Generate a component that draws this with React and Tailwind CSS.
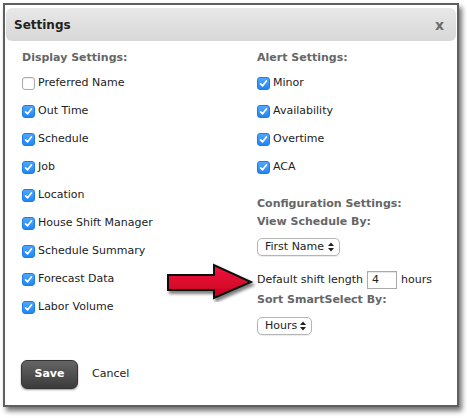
import React from 'react';

// checkbox drawn as a mac-style box
function Check({ on }) {
  if (!on) {
    return <span className="w-[13px] h-[13px] rounded-[3px] border border-[#a9a9a9] bg-white shadow-[inset_0_1px_1px_rgba(0,0,0,0.08)]" />;
  }
  return (
    <span className="w-[13px] h-[13px] rounded-[3px] bg-gradient-to-b from-[#4fa6ff] to-[#1f86f5] border border-[#1b7be0] flex items-center justify-center">
      <svg width="9" height="9" viewBox="0 0 9 9">
        <path d="M1.6 4.8 L3.6 6.8 L7.4 2" fill="none" stroke="white" strokeWidth="1.7" strokeLinecap="round" strokeLinejoin="round" />
      </svg>
    </span>
  );
}

function Row({ label, on = true }) {
  return (
    <div className="h-7 flex items-center gap-[3px] text-[#222]">
      <Check on={on} />
      <span>{label}</span>
    </div>
  );
}

function Select({ label, w }) {
  return (
    <div className={`h-[18px] ${w} rounded-[5px] border border-[#b5b5b5] bg-white flex items-center justify-between pl-[7px] pr-[5px] shadow-[0_1px_1px_rgba(0,0,0,0.08)] text-[#222]`}>
      <span>{label}</span>
      <svg width="6" height="10" viewBox="0 0 6 10">
        <path d="M0 4 L3 0.5 L6 4 Z M0 6 L3 9.5 L6 6 Z" fill="#222" />
      </svg>
    </div>
  );
}

function App() {
  const display = [
    ['Preferred Name', false],
    ['Out Time', true],
    ['Schedule', true],
    ['Job', true],
    ['Location', true],
    ['House Shift Manager', true],
    ['Schedule Summary', true],
    ['Forecast Data', true],
    ['Labor Volume', true],
  ];
  const alerts = ['Minor', 'Availability', 'Overtime', 'ACA'];

  return (
    <div className="w-[467px] h-[418px] bg-white p-[3px]" style={{ fontFamily: '"DejaVu Sans", Verdana, sans-serif' }}>
      <div className="relative w-[456px] h-[404px] border-2 border-[#5f5f5f] bg-white shadow-[3px_4px_5px_rgba(0,0,0,0.55)] text-[11px] flex flex-col">
        {/* header */}
        <div className="mx-[1px] mt-[3px] h-[33px] rounded-md bg-gradient-to-b from-[#e8e8e8] to-[#d7d7d7] flex items-center justify-between pl-[8px] pr-[12px]">
          <span className="text-[12px] font-bold text-[#222]">Settings</span>
          <span className="text-[14px] font-bold text-[#6b6b6b] leading-none">x</span>
        </div>

        {/* body */}
        <div className="flex pl-[17px] pt-[6px]">
          <div className="w-[235px]">
            <div className="h-[22px] flex items-center font-bold text-[#666]">Display Settings:</div>
            {display.map(([l, on]) => <Row key={l} label={l} on={on} />)}
          </div>
          <div>
            <div className="h-[22px] flex items-center font-bold text-[#666]">Alert Settings:</div>
            {alerts.map(l => <Row key={l} label={l} />)}
            <div className="mt-[14px] h-[18px] flex items-center font-bold text-[#666]">Configuration Settings:</div>
            <div className="h-[18px] flex items-center font-bold text-[#666]">View Schedule By:</div>
            <div className="mt-[7px]"><Select label="First Name" w="w-[83px]" /></div>
            <div className="mt-[15px] flex items-center gap-[4px] text-[#222]">
              <span>Default shift length</span>
              <span className="w-[30px] h-[18px] border border-[#aaa] bg-white flex items-center pl-[4px] shadow-[inset_0_1px_1px_rgba(0,0,0,0.1)]">4</span>
              <span>hours</span>
            </div>
            <div className="h-[22px] flex items-center font-bold text-[#666]">Sort SmartSelect By:</div>
            <div className="mt-[6px]"><Select label="Hours" w="w-[55px]" /></div>
          </div>
        </div>

        {/* footer */}
        <div className="mt-auto mb-[16px] pl-[16px] flex items-center gap-[14px]">
          <button className="w-[57px] h-[29px] rounded-md bg-gradient-to-b from-[#656565] to-[#3b3b3b] border border-[#333] text-white font-bold text-[11px] shadow-[0_1px_2px_rgba(0,0,0,0.4)]">Save</button>
          <span className="text-[#222]">Cancel</span>
        </div>

        {/* red arrow callout */}
        <svg className="absolute left-[161px] top-[257px]" width="92" height="40" viewBox="0 0 92 40">
          <defs>
            <linearGradient id="red" x1="0" y1="0" x2="0" y2="1">
              <stop offset="0" stopColor="#f0163e" />
              <stop offset="1" stopColor="#c8001f" />
            </linearGradient>
            <filter id="sh" x="-10%" y="-20%" width="130%" height="160%">
              <feDropShadow dx="2" dy="3" stdDeviation="1.5" floodColor="#000" floodOpacity="0.5" />
            </filter>
          </defs>
          <polygon points="2,13 48,13 48,3 85,20 48,36 48,28 2,28" fill="url(#red)" stroke="#111" strokeWidth="2" strokeLinejoin="miter" filter="url(#sh)" />
        </svg>
      </div>
    </div>
  );
}

export default App;
